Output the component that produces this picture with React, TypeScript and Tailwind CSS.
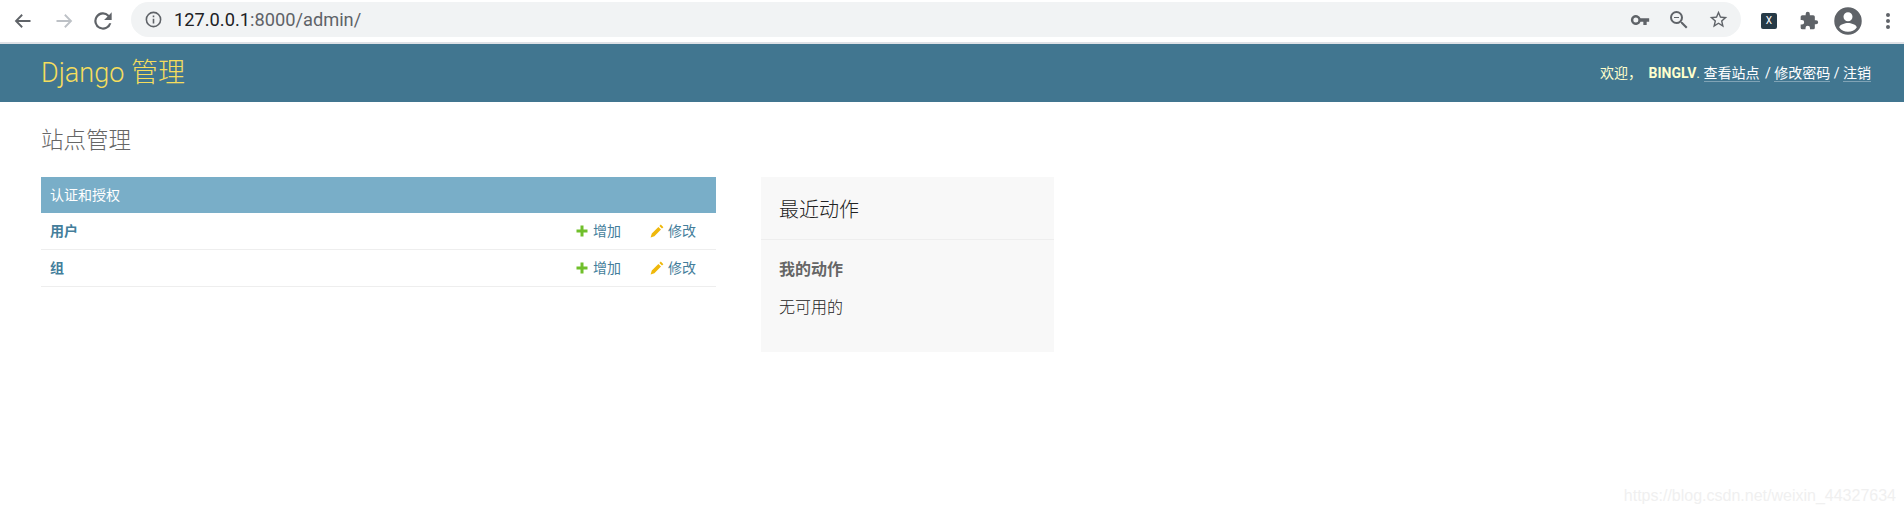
const font = "font-['Roboto','Noto_Sans_CJK_SC',sans-serif]";

function ModelRow({ name }: { name: string }) {
  return (
    <div className="flex h-[37px] items-center border-b border-[#eeeeee] pl-[9px] pr-[20px] text-[14px] text-[#447e9b]">
      <span className="flex-1 font-bold">{name}</span>
      <svg width="12" height="12" viewBox="0 0 12 12" className="mr-[5px]">
        <path d="M4.5 0.5h3v4h4v3h-4v4h-3v-4h-4v-3h4z" fill="#70bf2b" />
      </svg>
      <span>增加</span>
      <svg width="14" height="14" viewBox="0 0 14 14" className="ml-[29px] mr-[4px]">
        <path d="M10.8 0.6l2.6 2.6-1.4 1.4-2.6-2.6zM8.4 3l2.6 2.6-6.6 6.6-3.8 1.2 1.2-3.8z" fill="#efb80b" />
      </svg>
      <span>修改</span>
    </div>
  );
}

export default function App() {
  return (
    <div className={`relative h-[518px] w-[1904px] overflow-hidden bg-white ${font}`}>
      {/* browser bar */}
      <div className="flex h-[44px] items-start border-b-2 border-[#dee1e6] bg-white">
        <div className="flex h-[42px] w-[131px] items-center pl-[13px]">
          <svg width="20" height="20" viewBox="0 0 24 24" fill="none" stroke="#5f6368" strokeWidth="2.2"><path d="M21 12H4M11 4.5L3.6 12l7.4 7.5" /></svg>
          <svg width="20" height="20" viewBox="0 0 24 24" fill="none" stroke="#bdc1c6" strokeWidth="2.2" className="ml-[21px]"><path d="M3 12h17M13 4.5l7.4 7.5-7.4 7.5" /></svg>
          <svg width="26" height="26" viewBox="0 0 24 24" fill="#5f6368" className="ml-[16px]"><path d="M17.65 6.35A8 8 0 1 0 19.73 14h-2.08A6 6 0 1 1 12 6c1.66 0 3.14.69 4.22 1.78L13 11h7V4z" /></svg>
        </div>
        <div className="mt-[2px] flex h-[35px] w-[1610px] items-center rounded-full bg-[#f1f3f4] pl-[13px] pr-[12px]">
          <svg width="19" height="19" viewBox="0 0 24 24" fill="#5f6368"><path d="M11 7h2v2h-2zm0 4h2v6h-2zm1-9a10 10 0 1 0 0 20 10 10 0 0 0 0-20zm0 18a8 8 0 1 1 0-16 8 8 0 0 1 0 16z" /></svg>
          <span className="ml-[11px] flex-1 text-[18.25px] text-[#5f6368]">
            <span className="text-[#202124]">127.0.0.1</span>:8000/admin/
          </span>
          <div className="flex items-center gap-[17px]">
            <svg width="20" height="20" viewBox="0 0 24 24" fill="#5f6368"><path d="M12.65 10A6 6 0 1 0 12.65 14H16v4h4v-4h3v-4zM7 15a3 3 0 1 1 0-6 3 3 0 0 1 0 6z" /></svg>
            <svg width="24" height="24" viewBox="0 0 24 24" fill="#5f6368"><path d="M15.5 14h-.79l-.28-.27A6.47 6.47 0 0 0 16 9.5 6.5 6.5 0 1 0 9.5 16a6.47 6.47 0 0 0 4.23-1.57l.27.28v.79l5 5L20.5 19zm-6 0a4.5 4.5 0 1 1 0-9 4.5 4.5 0 0 1 0 9zM7 9h5v1H7z" /></svg>
            <svg width="21" height="21" viewBox="0 0 24 24" fill="#5f6368"><path d="M22 9.24l-7.19-.62L12 2 9.19 8.63 2 9.24l5.46 4.73L5.82 21 12 17.27 18.18 21l-1.63-7.03zM12 15.4l-3.76 2.27 1-4.28-3.32-2.88 4.38-.38L12 6.1l1.71 4.04 4.38.38-3.32 2.88 1 4.28z" /></svg>
          </div>
        </div>
        <div className="flex h-[42px] flex-1 items-center pl-[20px]">
          <span className="flex h-[16px] w-[16px] items-center justify-center rounded-[2px] bg-[#263a47] text-[10px] leading-none text-white">X</span>
          <svg width="20" height="20" viewBox="0 0 24 24" fill="#5f6368" className="ml-[22px]"><path d="M20.5 11H19V7a2 2 0 0 0-2-2h-4V3.5a2.5 2.5 0 0 0-5 0V5H4a2 2 0 0 0-2 2v3.8h1.5a2.7 2.7 0 0 1 0 5.4H2V20a2 2 0 0 0 2 2h3.8v-1.5a2.7 2.7 0 0 1 5.4 0V22H17a2 2 0 0 0 2-2v-4h1.5a2.5 2.5 0 0 0 0-5z" /></svg>
          <svg width="30" height="30" viewBox="0 0 24 24" fill="#5f6368" className="ml-[14px]"><path d="M12 1a11 11 0 1 0 0 22 11 11 0 0 0 0-22zm0 4a3.6 3.6 0 1 1 0 7.2A3.6 3.6 0 0 1 12 5zm0 15.6a8.8 8.8 0 0 1-7-3.5c.04-2.3 4.7-3.6 7-3.6s6.96 1.3 7 3.6a8.8 8.8 0 0 1-7 3.5z" /></svg>
          <svg width="16" height="20" viewBox="0 0 16 20" fill="#5f6368" className="ml-[17px]"><circle cx="8" cy="4" r="2" /><circle cx="8" cy="10" r="2" /><circle cx="8" cy="16" r="2" /></svg>
        </div>
      </div>

      {/* django header */}
      <div className="flex h-[58px] items-center justify-between bg-[#417690] pl-[41px] pr-[33px]">
        <div className="text-[27px] font-light text-[#f5dd5d]">Django 管理</div>
        <div className="text-[14px] text-[#ffffcc]">
          欢迎， <strong className="ml-[3px] font-bold">BINGLV</strong>.{" "}
          <span className="border-b border-[#ffffff55] text-white">查看站点</span>
          <span className="ml-[2px] text-white"> / </span>
          <span className="border-b border-[#ffffff55] text-white">修改密码</span>
          <span className="text-white"> / </span>
          <span className="border-b border-[#ffffff55] text-white">注销</span>
        </div>
      </div>

      {/* content */}
      <div className="pl-[41px] pt-[25px]">
        <h1 className="h-[50px] text-[22.5px] font-light leading-[26px] text-[#666666]">站点管理</h1>
        <div className="flex items-start">
          <div className="w-[675px]">
            <div className="flex h-[36px] items-center bg-[#79aec8] pl-[9px] text-[14px] text-white">认证和授权</div>
            <ModelRow name="用户" />
            <ModelRow name="组" />
          </div>
          <div className="ml-[45px] h-[175px] w-[293px] bg-[#f8f8f8] text-[#222222]">
            <div className="flex h-[63px] items-center border-b border-[#eeeeee] pl-[18px] pt-[4px] text-[20px] font-light">最近动作</div>
            <div className="pl-[18px] pt-[20px]">
              <div className="text-[16px] font-bold leading-[20px] text-[#666666]">我的动作</div>
              <div className="mt-[18px] text-[16px] font-light leading-[20px]">无可用的</div>
            </div>
          </div>
        </div>
      </div>

      {/* csdn watermark */}
      <div className="absolute bottom-[10px] right-[8px] font-['Liberation_Sans',sans-serif] text-[16px] text-[#f0f0f0]">
        https://blog.csdn.net/weixin_44327634
      </div>
    </div>
  );
}
